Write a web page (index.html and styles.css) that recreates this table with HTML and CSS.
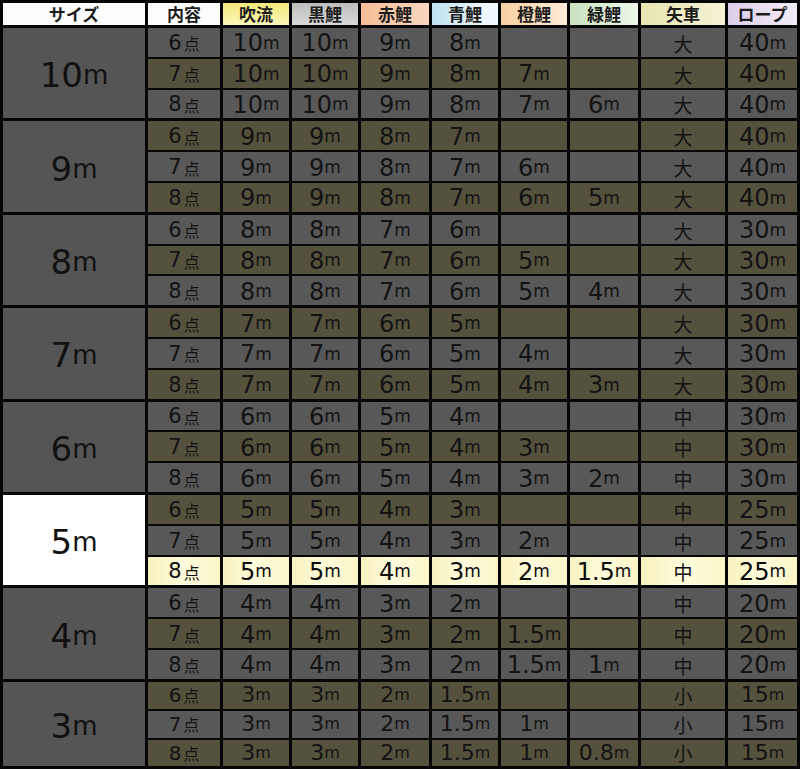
FILE: index.html
```html
<!DOCTYPE html>
<html lang="ja">
<head>
<meta charset="utf-8">
<title>鯉のぼりサイズ表</title>
<link rel="stylesheet" href="styles.css">
</head>
<body>
<div class="sheet">
  <div class="grid head">
    <div class="h h-white">サイズ</div>
    <div class="h h-white">内容</div>
    <div class="h h-fuki">吹流</div>
    <div class="h h-kuro">黒鯉</div>
    <div class="h h-aka">赤鯉</div>
    <div class="h h-ao">青鯉</div>
    <div class="h h-dai">橙鯉</div>
    <div class="h h-midori">緑鯉</div>
    <div class="h h-ya">矢車</div>
    <div class="h h-rope">ロープ</div>
  </div>

  <div class="grid group">
    <div class="size">10<i>m</i></div>
    <div class="row g"><div class="pt">6<b>点</b></div><div>10<i>m</i></div><div>10<i>m</i></div><div>9<i>m</i></div><div>8<i>m</i></div><div></div><div></div><div class="ya">大</div><div>40<i>m</i></div></div>
    <div class="row o"><div class="pt">7<b>点</b></div><div>10<i>m</i></div><div>10<i>m</i></div><div>9<i>m</i></div><div>8<i>m</i></div><div>7<i>m</i></div><div></div><div class="ya">大</div><div>40<i>m</i></div></div>
    <div class="row g"><div class="pt">8<b>点</b></div><div>10<i>m</i></div><div>10<i>m</i></div><div>9<i>m</i></div><div>8<i>m</i></div><div>7<i>m</i></div><div>6<i>m</i></div><div class="ya">大</div><div>40<i>m</i></div></div>
  </div>

  <div class="grid group">
    <div class="size">9<i>m</i></div>
    <div class="row o"><div class="pt">6<b>点</b></div><div>9<i>m</i></div><div>9<i>m</i></div><div>8<i>m</i></div><div>7<i>m</i></div><div></div><div></div><div class="ya">大</div><div>40<i>m</i></div></div>
    <div class="row g"><div class="pt">7<b>点</b></div><div>9<i>m</i></div><div>9<i>m</i></div><div>8<i>m</i></div><div>7<i>m</i></div><div>6<i>m</i></div><div></div><div class="ya">大</div><div>40<i>m</i></div></div>
    <div class="row o"><div class="pt">8<b>点</b></div><div>9<i>m</i></div><div>9<i>m</i></div><div>8<i>m</i></div><div>7<i>m</i></div><div>6<i>m</i></div><div>5<i>m</i></div><div class="ya">大</div><div>40<i>m</i></div></div>
  </div>

  <div class="grid group">
    <div class="size">8<i>m</i></div>
    <div class="row g"><div class="pt">6<b>点</b></div><div>8<i>m</i></div><div>8<i>m</i></div><div>7<i>m</i></div><div>6<i>m</i></div><div></div><div></div><div class="ya">大</div><div>30<i>m</i></div></div>
    <div class="row o"><div class="pt">7<b>点</b></div><div>8<i>m</i></div><div>8<i>m</i></div><div>7<i>m</i></div><div>6<i>m</i></div><div>5<i>m</i></div><div></div><div class="ya">大</div><div>30<i>m</i></div></div>
    <div class="row g"><div class="pt">8<b>点</b></div><div>8<i>m</i></div><div>8<i>m</i></div><div>7<i>m</i></div><div>6<i>m</i></div><div>5<i>m</i></div><div>4<i>m</i></div><div class="ya">大</div><div>30<i>m</i></div></div>
  </div>

  <div class="grid group">
    <div class="size">7<i>m</i></div>
    <div class="row o"><div class="pt">6<b>点</b></div><div>7<i>m</i></div><div>7<i>m</i></div><div>6<i>m</i></div><div>5<i>m</i></div><div></div><div></div><div class="ya">大</div><div>30<i>m</i></div></div>
    <div class="row g"><div class="pt">7<b>点</b></div><div>7<i>m</i></div><div>7<i>m</i></div><div>6<i>m</i></div><div>5<i>m</i></div><div>4<i>m</i></div><div></div><div class="ya">大</div><div>30<i>m</i></div></div>
    <div class="row o"><div class="pt">8<b>点</b></div><div>7<i>m</i></div><div>7<i>m</i></div><div>6<i>m</i></div><div>5<i>m</i></div><div>4<i>m</i></div><div>3<i>m</i></div><div class="ya">大</div><div>30<i>m</i></div></div>
  </div>

  <div class="grid group">
    <div class="size">6<i>m</i></div>
    <div class="row g"><div class="pt">6<b>点</b></div><div>6<i>m</i></div><div>6<i>m</i></div><div>5<i>m</i></div><div>4<i>m</i></div><div></div><div></div><div class="ya">中</div><div>30<i>m</i></div></div>
    <div class="row o"><div class="pt">7<b>点</b></div><div>6<i>m</i></div><div>6<i>m</i></div><div>5<i>m</i></div><div>4<i>m</i></div><div>3<i>m</i></div><div></div><div class="ya">中</div><div>30<i>m</i></div></div>
    <div class="row g"><div class="pt">8<b>点</b></div><div>6<i>m</i></div><div>6<i>m</i></div><div>5<i>m</i></div><div>4<i>m</i></div><div>3<i>m</i></div><div>2<i>m</i></div><div class="ya">中</div><div>30<i>m</i></div></div>
  </div>

  <div class="grid group">
    <div class="size size-hl">5<i>m</i></div>
    <div class="row o"><div class="pt">6<b>点</b></div><div>5<i>m</i></div><div>5<i>m</i></div><div>4<i>m</i></div><div>3<i>m</i></div><div></div><div></div><div class="ya">中</div><div>25<i>m</i></div></div>
    <div class="row g"><div class="pt">7<b>点</b></div><div>5<i>m</i></div><div>5<i>m</i></div><div>4<i>m</i></div><div>3<i>m</i></div><div>2<i>m</i></div><div></div><div class="ya">中</div><div>25<i>m</i></div></div>
    <div class="row hl"><div class="pt">8<b>点</b></div><div>5<i>m</i></div><div>5<i>m</i></div><div>4<i>m</i></div><div>3<i>m</i></div><div>2<i>m</i></div><div>1.5<i>m</i></div><div class="ya">中</div><div>25<i>m</i></div></div>
  </div>

  <div class="grid group">
    <div class="size">4<i>m</i></div>
    <div class="row g"><div class="pt">6<b>点</b></div><div>4<i>m</i></div><div>4<i>m</i></div><div>3<i>m</i></div><div>2<i>m</i></div><div></div><div></div><div class="ya">中</div><div>20<i>m</i></div></div>
    <div class="row o"><div class="pt">7<b>点</b></div><div>4<i>m</i></div><div>4<i>m</i></div><div>3<i>m</i></div><div>2<i>m</i></div><div>1.5<i>m</i></div><div></div><div class="ya">中</div><div>20<i>m</i></div></div>
    <div class="row g"><div class="pt">8<b>点</b></div><div>4<i>m</i></div><div>4<i>m</i></div><div>3<i>m</i></div><div>2<i>m</i></div><div>1.5<i>m</i></div><div>1<i>m</i></div><div class="ya">中</div><div>20<i>m</i></div></div>
  </div>

  <div class="grid group group-last">
    <div class="size">3<i>m</i></div>
    <div class="row o"><div class="pt">6<b>点</b></div><div>3<i>m</i></div><div>3<i>m</i></div><div>2<i>m</i></div><div>1.5<i>m</i></div><div></div><div></div><div class="ya">小</div><div>15<i>m</i></div></div>
    <div class="row g"><div class="pt">7<b>点</b></div><div>3<i>m</i></div><div>3<i>m</i></div><div>2<i>m</i></div><div>1.5<i>m</i></div><div>1<i>m</i></div><div></div><div class="ya">小</div><div>15<i>m</i></div></div>
    <div class="row o"><div class="pt">8<b>点</b></div><div>3<i>m</i></div><div>3<i>m</i></div><div>2<i>m</i></div><div>1.5<i>m</i></div><div>1<i>m</i></div><div>0.8<i>m</i></div><div class="ya">小</div><div>15<i>m</i></div></div>
  </div>
</div>
</body>
</html>
```
FILE: styles.css
```css
html, body {
  margin: 0;
  padding: 0;
  background: #060606;
}

body {
  font-family: "DejaVu Sans", "Noto Sans CJK JP", sans-serif;
  color: #131313;
}

.sheet {
  box-sizing: border-box;
  height: 766px;
  overflow: hidden;
  padding: 3px 0 0 3px;
  display: flex;
  flex-direction: column;
  gap: 3px;
}

.grid {
  display: grid;
  grid-template-columns: 142px 72px 66px 66px 68px 66px 66px 68px 84px 69px;
  column-gap: 3px;
  flex-shrink: 0;
}

/* header */
.head {
  height: 22px;
}

.h {
  font-family: "Noto Sans CJK JP", sans-serif;
  font-weight: 700;
  font-size: 17px;
  line-height: 22px;
  text-align: center;
  color: #1c1c1c;
}

.h-white { background: #fdfdfd; }
.h-fuki { background: linear-gradient(#f4ea7c, #fbf5b8); }
.h-kuro { background: linear-gradient(#bdbdbd, #d9d9d9); }
.h-aka { background: linear-gradient(to right, #f6bd98, #fad7bf); }
.h-ao { background: linear-gradient(to right, #bfe2f2, #eef8fc 80%); }
.h-dai { background: linear-gradient(to right, #f8cfa2, #fdecd8); }
.h-midori { background: linear-gradient(to right, #c9e4c0, #eef7ea); }
.h-ya { background: linear-gradient(to right, #e8e5b0, #f5f3d6); }
.h-rope { background: linear-gradient(to right, #dccdea, #f3edf7); }

/* body groups */
.group {
  grid-template-rows: repeat(3, 28.8px);
  row-gap: 2px;
}

.group-last {
  grid-template-rows: 27px 27px 26px;
}

.row {
  display: contents;
}

.row > div {
  display: flex;
  align-items: center;
  justify-content: center;
  font-size: 24px;
  line-height: 1;
  padding-top: 2px;
  box-sizing: border-box;
}

.group-last .row > div {
  font-size: 22px;
  padding-top: 0;
}

.row i {
  font-style: normal;
  font-size: 17px;
}

.group-last .row i {
  font-size: 16px;
}

.row .pt {
  font-size: 21px;
}

.group-last .row .pt {
  font-size: 20px;
}

.row .pt b {
  font-family: "Noto Sans CJK JP", sans-serif;
  font-weight: 400;
  font-size: 16px;
  margin-left: 2px;
}

.row .ya,
.group-last .row .ya {
  font-family: "Noto Sans CJK JP", sans-serif;
  font-size: 19px;
}

.g > div { background: #585858; }
.o > div { background: #54523d; }
.hl > div { background: linear-gradient(to right, #f7f2bf, #fefcdc 50%, #f9f5c6); color: #0c0c0c; }

.size {
  grid-row: span 3;
  background: #555555;
  display: flex;
  align-items: center;
  justify-content: center;
  font-size: 34px;
  line-height: 1;
  color: #111;
  padding-top: 4px;
  box-sizing: border-box;
}

.size i {
  font-style: normal;
  font-size: 26px;
}

.size-hl {
  background: #ffffff;
}
```
